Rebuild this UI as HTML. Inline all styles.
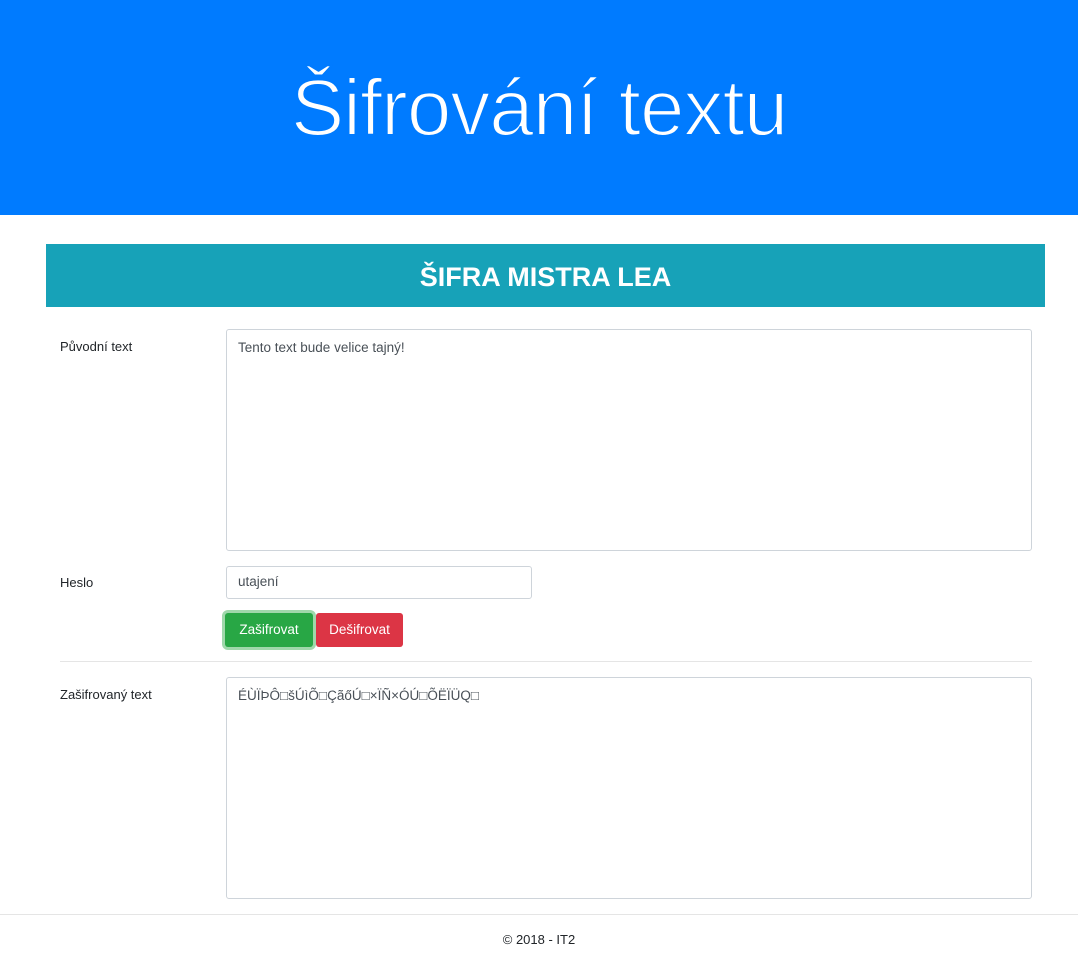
<!DOCTYPE html>
<html><head><meta charset="utf-8"><style>
*{box-sizing:border-box;margin:0;padding:0}
body{width:1078px;height:958px;font-family:"Liberation Sans","DejaVu Sans",sans-serif;color:#212529;background:#fff;position:relative;overflow:hidden}
.hdr{position:absolute;left:0;top:0;width:1078px;height:215px;background:#007bff;color:#fff;text-align:center;font-size:80px;line-height:215px;letter-spacing:-1px;-webkit-text-stroke:2px #007bff}
.ban{position:absolute;left:46px;top:244px;width:999px;height:63px;background:#17a2b8;color:#fff;text-align:center;font-size:27px;font-weight:bold;line-height:66px}
.lbl{position:absolute;left:60px;font-size:13px}
.box{position:absolute;border:1px solid #ced4da;border-radius:3px;font-size:13.5px;color:#495057;padding:10px 11px}
.btn{position:absolute;top:613px;height:34px;border-radius:3px;color:#fff;font-size:13.5px;line-height:34px;text-align:center}
</style></head><body>
<div class="hdr">Šifrování textu</div>
<div class="ban">ŠIFRA MISTRA LEA</div>
<div class="lbl" style="top:339px">Původní text</div>
<div class="box" style="left:226px;top:329px;width:806px;height:222px">Tento text bude velice tajný!</div>
<div class="lbl" style="top:575px">Heslo</div>
<div class="box" style="left:226px;top:566px;width:306px;height:33px;padding:7px 11px">utajení</div>
<div class="btn" style="left:225px;width:88px;background:#28a745;box-shadow:0 0 0 3px #9fd8ab">Zašifrovat</div>
<div class="btn" style="left:316px;width:87px;background:#dc3545">Dešifrovat</div>
<div style="position:absolute;left:60px;top:661px;width:972px;border-top:1px solid #e5e5e5"></div>
<div class="lbl" style="top:687px">Zašifrovaný text</div>
<div class="box" style="left:226px;top:677px;width:806px;height:222px">ÉÙÏÞÔ□šÚìÕ□ÇãőÚ□×ÏÑ×ÓÚ□ÕËÏÜQ□</div>
<div style="position:absolute;left:0;top:914px;width:1078px;border-top:1px solid #e5e5e5"></div>
<div style="position:absolute;left:0;top:932px;width:1078px;text-align:center;font-size:13px">© 2018 - IT2</div>
</body></html>
